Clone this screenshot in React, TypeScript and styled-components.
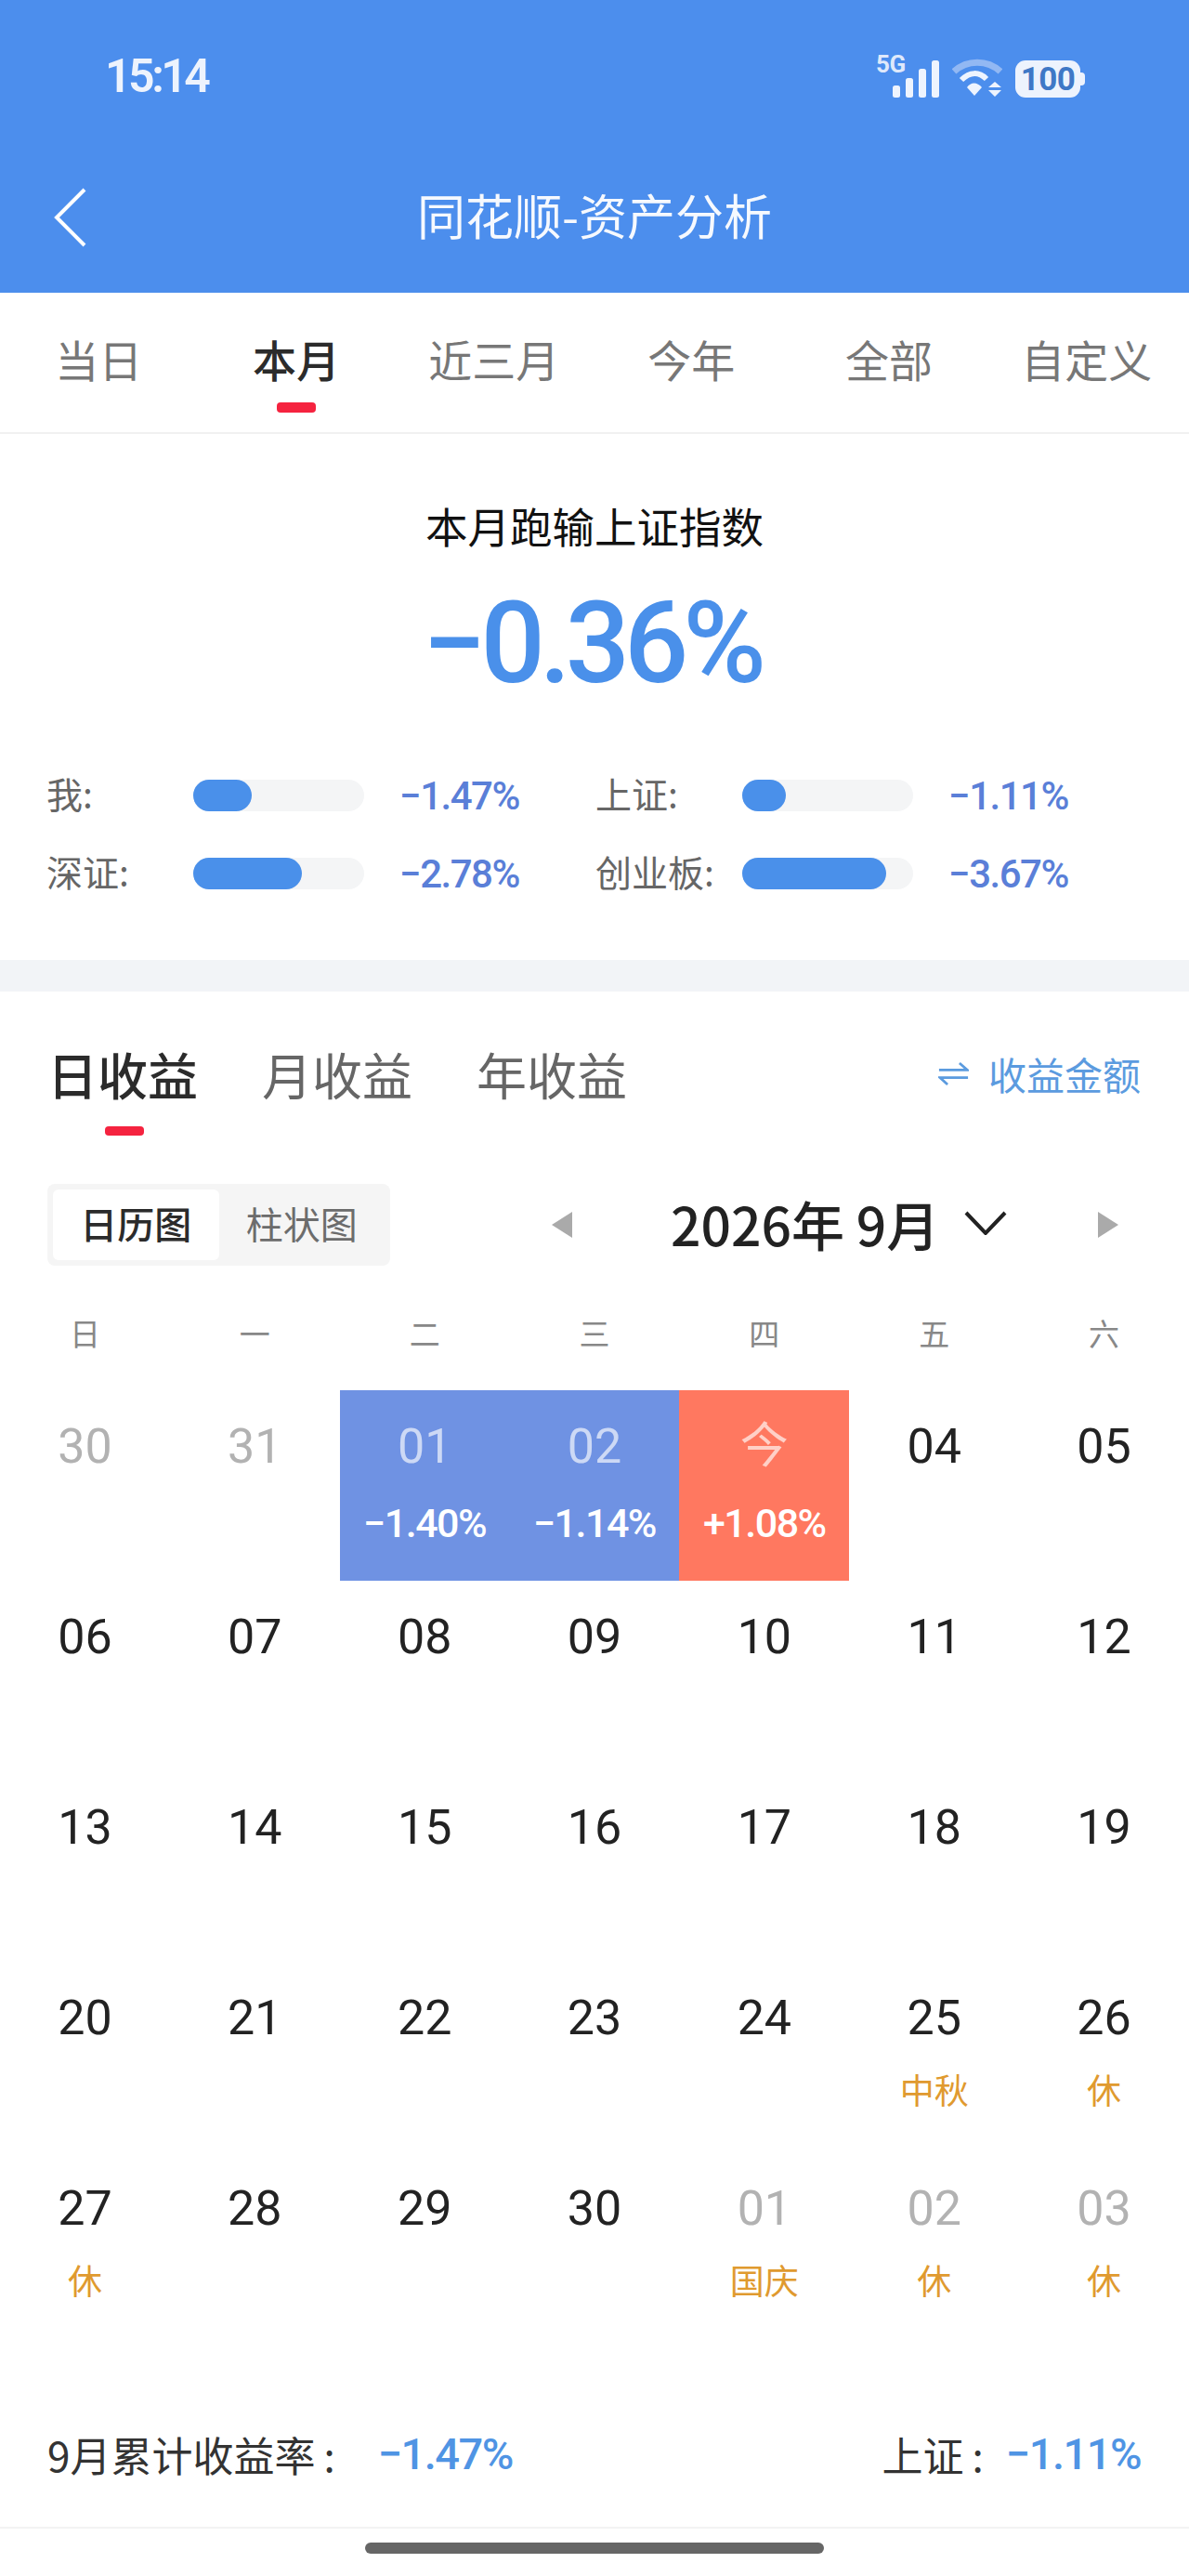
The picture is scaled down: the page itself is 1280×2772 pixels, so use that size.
import styled, { createGlobalStyle } from 'styled-components'

const CJK = `'Noto Sans CJK SC', sans-serif`
const NUM = `Roboto, 'Noto Sans CJK SC', sans-serif`

const GlobalStyle = createGlobalStyle`
  html, body {
    margin: 0;
    padding: 0;
    background: #fff;
  }
  * {
    box-sizing: border-box;
  }
`

const periods = ['当日', '本月', '近三月', '今年', '全部', '自定义']

const stats = [
  { label: '我:', value: '−1.47%', fill: 63 },
  { label: '上证:', value: '−1.11%', fill: 47 },
  { label: '深证:', value: '−2.78%', fill: 117 },
  { label: '创业板:', value: '−3.67%', fill: 155 },
]

const weekdays = ['日', '一', '二', '三', '四', '五', '六']

type Day = {
  date: string
  muted?: boolean
  tone?: 'down' | 'up'
  rate?: string
  note?: string
}

const days: Day[] = [
  { date: '30', muted: true },
  { date: '31', muted: true },
  { date: '01', tone: 'down', rate: '−1.40%' },
  { date: '02', tone: 'down', rate: '−1.14%' },
  { date: '今', tone: 'up', rate: '+1.08%' },
  { date: '04' },
  { date: '05' },
  { date: '06' },
  { date: '07' },
  { date: '08' },
  { date: '09' },
  { date: '10' },
  { date: '11' },
  { date: '12' },
  { date: '13' },
  { date: '14' },
  { date: '15' },
  { date: '16' },
  { date: '17' },
  { date: '18' },
  { date: '19' },
  { date: '20' },
  { date: '21' },
  { date: '22' },
  { date: '23' },
  { date: '24' },
  { date: '25', note: '中秋' },
  { date: '26', note: '休' },
  { date: '27', note: '休' },
  { date: '28' },
  { date: '29' },
  { date: '30' },
  { date: '01', muted: true, note: '国庆' },
  { date: '02', muted: true, note: '休' },
  { date: '03', muted: true, note: '休' },
]

export default function App() {
  return (
    <Page>
      <GlobalStyle />
      <Header>
        <StatusBar>
          <Time>15:14</Time>
          <StatusIcons>
            <Signal>
              <FiveG>5G</FiveG>
              <svg width="50" height="40" viewBox="0 0 50 40">
                <rect x="0" y="27" width="8" height="13" rx="2.5" fill="#eef4fe" />
                <rect x="14" y="19" width="8" height="21" rx="2.5" fill="#eef4fe" />
                <rect x="28" y="9" width="8" height="31" rx="2.5" fill="#eef4fe" />
                <rect x="42" y="0" width="8" height="40" rx="2.5" fill="#eef4fe" />
              </svg>
            </Signal>
            <svg width="54" height="42" viewBox="0 0 54 42">
              <path d="M2 14 C16 1 38 1 52 14" fill="none" stroke="#92b8f3" strokeWidth="7" />
              <path d="M10 23 C19 14 29 14 37 22" fill="none" stroke="#eef4fe" strokeWidth="6" />
              <path d="M16 31 C20 25 27 25 32 31 L24 40 Z" fill="#eef4fe" />
              <path d="M46 25 L53 31 L39 31 Z M46 41 L53 34 L39 34 Z" fill="#eef4fe" />
            </svg>
            <Battery>
              <BatteryText>100</BatteryText>
            </Battery>
          </StatusIcons>
        </StatusBar>
        <NavBar>
          <BackIcon width="36" height="64" viewBox="0 0 36 64">
            <path d="M33 2 L3 32 L33 62" fill="none" stroke="#fff" strokeWidth="4" />
          </BackIcon>
          <Title>同花顺-资产分析</Title>
        </NavBar>
      </Header>

      <PeriodTabs>
        {periods.map(period => (
          <PeriodTab key={period} $active={period === '本月'}>
            {period}
          </PeriodTab>
        ))}
      </PeriodTabs>

      <Summary>
        <SummaryTitle>本月跑输上证指数</SummaryTitle>
        <SummaryValue>−0.36%</SummaryValue>
        <StatGrid>
          {stats.map(stat => (
            <Stat key={stat.label}>
              <StatLabel>{stat.label}</StatLabel>
              <StatTrack>
                <StatFill style={{ width: stat.fill }} />
              </StatTrack>
              <StatValue>{stat.value}</StatValue>
            </Stat>
          ))}
        </StatGrid>
      </Summary>

      <Divider />

      <ProfitTabs>
        <ProfitTabGroup>
          <ProfitTab $active>日收益</ProfitTab>
          <ProfitTab>月收益</ProfitTab>
          <ProfitTab>年收益</ProfitTab>
        </ProfitTabGroup>
        <AmountLink>
          <svg width="33" height="28" viewBox="0 0 36 28">
            <path d="M1 10 H34 L25 2" fill="none" stroke="#5b9bdf" strokeWidth="3" />
            <path d="M35 19 H2 L11 27" fill="none" stroke="#5b9bdf" strokeWidth="3" />
          </svg>
          收益金额
        </AmountLink>
      </ProfitTabs>

      <CalendarBar>
        <ChartToggle>
          <ToggleItem $active>日历图</ToggleItem>
          <ToggleItem>柱状图</ToggleItem>
        </ChartToggle>
        <MonthPicker>
          <MonthArrow $dir="left" />
          <MonthLabel>
            2026年 9月
            <svg width="46" height="26" viewBox="0 0 46 26">
              <path d="M2 2 L23 24 L44 2" fill="none" stroke="#222" strokeWidth="4" />
            </svg>
          </MonthLabel>
          <MonthArrow $dir="right" />
        </MonthPicker>
      </CalendarBar>

      <WeekRow>
        {weekdays.map(day => (
          <WeekDay key={day}>{day}</WeekDay>
        ))}
      </WeekRow>

      <DayGrid>
        {days.map((day, i) => (
          <DayCell key={i} $tone={day.tone}>
            <DayDate $muted={day.muted} $filled={!!day.tone}>
              {day.date}
            </DayDate>
            {day.rate && <DayRate>{day.rate}</DayRate>}
            {day.note && <DayNote>{day.note}</DayNote>}
          </DayCell>
        ))}
      </DayGrid>

      <Footer>
        <FooterItem>
          9月累计收益率
          <FooterColon>:</FooterColon>
          <FooterValue $gap={46}>−1.47%</FooterValue>
        </FooterItem>
        <FooterItem>
          上证
          <FooterColon>:</FooterColon>
          <FooterValue $gap={24}>−1.11%</FooterValue>
        </FooterItem>
      </Footer>

      <HomeArea>
        <HomeBar />
      </HomeArea>
    </Page>
  )
}

const Page = styled.div`
  width: 1280px;
  height: 2772px;
  overflow: hidden;
  background: #fff;
  font-family: ${CJK};
`

const Header = styled.header`
  height: 315px;
  padding-top: 57px;
  background: #4c8eed;
  color: #fff;
`

const StatusBar = styled.div`
  display: flex;
  align-items: center;
  justify-content: space-between;
  height: 50px;
  padding: 0 112px 0 113px;
`

const Time = styled.div`
  font-family: ${NUM};
  font-size: 50px;
  font-weight: 600;
  line-height: 50px;
  letter-spacing: -3.5px;
  color: #edf3fd;
`

const StatusIcons = styled.div`
  display: flex;
  align-items: flex-end;
  gap: 14px;
`

const Signal = styled.div`
  position: relative;
  display: flex;
  margin-top: 6px;
`

const FiveG = styled.span`
  position: absolute;
  left: -18px;
  top: -9px;
  font-family: ${NUM};
  font-size: 26px;
  font-weight: 700;
  line-height: 26px;
  letter-spacing: -0.5px;
  color: #dfe9fb;
`

const Battery = styled.div`
  position: relative;
  display: flex;
  align-items: center;
  justify-content: center;
  width: 70px;
  height: 40px;
  margin-right: 5px;
  border-radius: 11px;
  background: #edf3fd;

  &::after {
    content: '';
    position: absolute;
    right: -5px;
    top: 13px;
    width: 5px;
    height: 14px;
    border-radius: 0 4px 4px 0;
    background: #edf3fd;
  }
`

const BatteryText = styled.span`
  font-family: ${NUM};
  font-size: 35px;
  font-weight: 700;
  letter-spacing: -0.5px;
  color: #3f78c6;
`

const NavBar = styled.div`
  position: relative;
  display: flex;
  align-items: center;
  justify-content: center;
  height: 64px;
  margin-top: 92px;
`

const BackIcon = styled.svg`
  position: absolute;
  left: 58px;
  top: 3px;
`

const Title = styled.h1`
  margin: 0;
  font-size: 52px;
  font-weight: 400;
  line-height: 64px;
  color: #f6f9fe;
`

const PeriodTabs = styled.nav`
  display: grid;
  grid-template-columns: repeat(6, 1fr);
  height: 152px;
  padding-right: 4px;
  border-bottom: 2px solid #f1f1f1;
`

const PeriodTab = styled.div<{ $active?: boolean }>`
  position: relative;
  padding-top: 41px;
  font-size: 47px;
  line-height: 60px;
  text-align: center;
  font-weight: ${props => (props.$active ? 500 : 400)};
  color: ${props => (props.$active ? '#2b2b2b' : '#777')};

  &::after {
    content: '';
    display: ${props => (props.$active ? 'block' : 'none')};
    position: absolute;
    left: 50%;
    top: 118px;
    width: 42px;
    height: 11px;
    margin-left: -21px;
    border-radius: 4px;
    background: #f5233f;
  }
`

const Summary = styled.section`
  height: 566px;
  padding-top: 68px;
  text-align: center;
`

const SummaryTitle = styled.div`
  font-size: 45.5px;
  line-height: 60px;
  color: #111;
`

const SummaryValue = styled.div`
  margin-top: 38px;
  padding-right: 6px;
  font-family: ${NUM};
  font-size: 122px;
  font-weight: 500;
  line-height: 120px;
  letter-spacing: -6px;
  color: #4a90ea;
`

const StatGrid = styled.div`
  display: grid;
  grid-template-columns: 591px 591px;
  row-gap: 50px;
  margin-top: 86px;
  padding-left: 50px;
  text-align: left;
`

const Stat = styled.div`
  display: flex;
  align-items: center;
  height: 34px;
`

const StatLabel = styled.div`
  width: 158px;
  padding-bottom: 6px;
  font-size: 39px;
  line-height: 34px;
  color: #666;
`

const StatTrack = styled.div`
  width: 184px;
  height: 34px;
  border-radius: 17px;
  background: #f4f5f6;
`

const StatFill = styled.div`
  height: 100%;
  border-radius: 17px;
  background: #4a90ea;
`

const StatValue = styled.div`
  margin-left: 38px;
  font-family: ${NUM};
  font-size: 42px;
  font-weight: 500;
  letter-spacing: -1.5px;
  color: #5a7fd8;
`

const Divider = styled.div`
  height: 34px;
  background: #f2f4f7;
`

const ProfitTabs = styled.div`
  display: flex;
  align-items: flex-start;
  justify-content: space-between;
  height: 207px;
  padding: 55px 52px 0 51px;
`

const ProfitTabGroup = styled.div`
  display: flex;
  gap: 69px;
`

const ProfitTab = styled.div<{ $active?: boolean }>`
  position: relative;
  font-size: 54px;
  line-height: 68px;
  font-weight: ${props => (props.$active ? 500 : 400)};
  color: ${props => (props.$active ? '#2b2b2b' : '#666')};

  &::after {
    content: '';
    display: ${props => (props.$active ? 'block' : 'none')};
    position: absolute;
    left: 62px;
    top: 90px;
    width: 42px;
    height: 10px;
    border-radius: 4px;
    background: #f5233f;
  }
`

const AmountLink = styled.div`
  display: flex;
  align-items: center;
  gap: 21px;
  padding-top: 3px;
  font-size: 41px;
  line-height: 60px;
  color: #5b9bdf;
`

const CalendarBar = styled.div`
  display: flex;
  align-items: center;
  height: 88px;
  padding-left: 51px;
`

const ChartToggle = styled.div`
  display: flex;
  width: 369px;
  height: 88px;
  padding: 6px;
  border-radius: 8px;
  background: #f5f5f5;
`

const ToggleItem = styled.div<{ $active?: boolean }>`
  width: 179px;
  border-radius: 6px;
  font-size: 40px;
  line-height: 72px;
  text-align: center;
  font-weight: ${props => (props.$active ? 500 : 400)};
  background: ${props => (props.$active ? '#fff' : 'transparent')};
  color: ${props => (props.$active ? '#2b2b2b' : '#6c6c6c')};
`

const MonthPicker = styled.div`
  display: flex;
  align-items: center;
  margin-left: 174px;
`

const MonthArrow = styled.div<{ $dir: 'left' | 'right' }>`
  width: 0;
  height: 0;
  border-top: 14px solid transparent;
  border-bottom: 14px solid transparent;
  border-left: ${props => (props.$dir === 'right' ? '22px solid #aaa' : 'none')};
  border-right: ${props => (props.$dir === 'left' ? '22px solid #aaa' : 'none')};
`

const MonthLabel = styled.div`
  display: flex;
  align-items: center;
  gap: 27px;
  width: 566px;
  padding: 0 0 4px 106px;
  font-size: 57px;
  font-weight: 500;
  line-height: 70px;
  white-space: nowrap;
  color: #222;
`

const WeekRow = styled.div`
  display: grid;
  grid-template-columns: repeat(7, 1fr);
  height: 134px;
  padding-top: 50px;
`

const WeekDay = styled.div`
  font-size: 33px;
  line-height: 44px;
  text-align: center;
  color: #888;
`

const DayGrid = styled.div`
  display: grid;
  grid-template-columns: repeat(7, 1fr);
  grid-auto-rows: 205px;
`

const DayCell = styled.div<{ $tone?: 'down' | 'up' }>`
  display: flex;
  flex-direction: column;
  align-items: center;
  padding-top: 31px;
  background: ${props =>
    props.$tone === 'down' ? '#6f92e3' : props.$tone === 'up' ? '#ff7860' : 'transparent'};
`

const DayDate = styled.div<{ $muted?: boolean; $filled?: boolean }>`
  font-family: ${NUM};
  font-size: 52px;
  line-height: 60px;
  color: ${props => (props.$filled ? 'rgba(255, 255, 255, 0.65)' : props.$muted ? '#b2b2b2' : '#222')};
`

const DayRate = styled.div`
  margin-top: 23px;
  font-family: ${NUM};
  font-size: 43px;
  font-weight: 500;
  line-height: 58px;
  letter-spacing: -1.5px;
  color: #fff;
`

const DayNote = styled.div`
  margin-top: 20px;
  font-size: 37px;
  line-height: 52px;
  color: #e09a2f;
`

const Footer = styled.div`
  display: flex;
  align-items: flex-start;
  justify-content: space-between;
  height: 200px;
  padding: 90px 52px 0 51px;
  border-bottom: 2px solid #f3f3f3;
`

const FooterItem = styled.div`
  display: flex;
  align-items: center;
  font-size: 44px;
  line-height: 60px;
  color: #333;
`

const FooterColon = styled.span`
  margin-left: 9px;
`

const FooterValue = styled.span<{ $gap: number }>`
  margin-left: ${props => props.$gap}px;
  font-family: ${NUM};
  font-size: 47px;
  font-weight: 500;
  letter-spacing: -1.5px;
  color: #4f94e4;
`

const HomeArea = styled.div`
  display: flex;
  justify-content: center;
  padding-top: 15px;
`

const HomeBar = styled.div`
  width: 494px;
  height: 12px;
  border-radius: 6px;
  background: #666;
`
